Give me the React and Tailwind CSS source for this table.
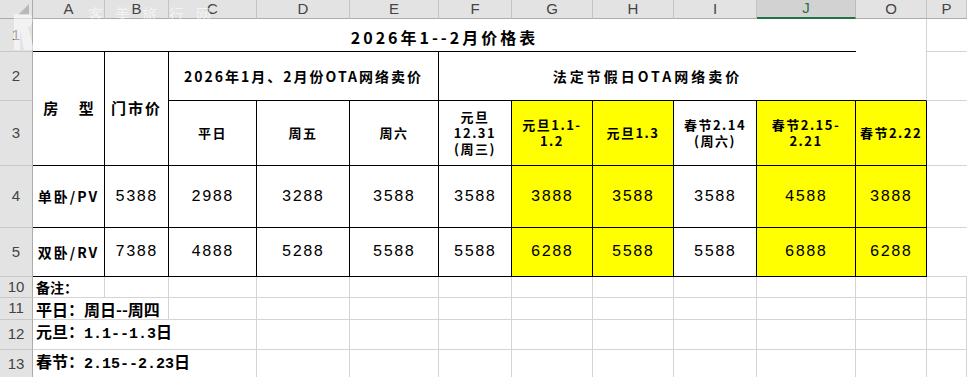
import React from 'react';

const cjk = "font-['SimSun','Noto_Sans_CJK_SC',sans-serif]";
const mono = "font-['Liberation_Mono','Noto_Sans_CJK_SC',monospace]";

const cols = ['A', 'B', 'C', 'D', 'E', 'F', 'G', 'H', 'I', 'J', 'O', 'P'];

function ColHead({ label }) {
  if (label === 'J') {
    return (
      <div className="flex items-center justify-center bg-[#d2d2d2] border-r border-r-[#bcbcbc] border-b-2 border-b-[#217346] text-[15px] text-[#217346] font-['Liberation_Sans',sans-serif]">
        {label}
      </div>
    );
  }
  return (
    <div className="flex items-center justify-center bg-[#e3e3e3] border-r border-r-[#c4c4c4] border-b border-b-[#ababab] text-[15px] text-[#444] font-['Liberation_Sans',sans-serif]">
      {label}
    </div>
  );
}

function RowHead({ n }) {
  return (
    <div className="flex items-center justify-center bg-[#e3e3e3] border-r border-r-[#ababab] border-b border-b-[#c8c8c8] text-[15px] text-[#444] font-['Liberation_Sans',sans-serif]">
      {n}
    </div>
  );
}

function Box({ className = '', children }) {
  return (
    <div className={'flex items-center justify-center text-center text-black border-r border-b ' + className}>
      {children}
    </div>
  );
}

const rows = [
  { n: 4, name: '单卧/PV', vals: ['5388', '2988', '3288', '3588', '3588', '3888', '3588', '3588', '4588', '3888'] },
  { n: 5, name: '双卧/RV', vals: ['7388', '4888', '5288', '5588', '5588', '6288', '5588', '5588', '6888', '6288'] },
];

// which of B..O are yellow
const yellow = [false, false, false, false, false, true, true, false, true, true];

const heads3 = [
  { t: ['平日'], y: false },
  { t: ['周五'], y: false },
  { t: ['周六'], y: false },
  { t: ['元旦', '12.31', '(周三)'], y: false },
  { t: ['元旦1.1-', '1.2'], y: true },
  { t: ['元旦1.3'], y: true },
  { t: ['春节2.14', '(周六)'], y: false },
  { t: ['春节2.15-', '2.21'], y: true },
  { t: ['春节2.22'], y: true },
];

export default function App() {
  return (
    <div className="relative h-[377px] w-[967px] overflow-hidden bg-white">
      <div className="grid grid-cols-[33px_72px_64px_88px_93px_89px_73px_81px_81px_83px_99px_71px_1fr] grid-rows-[19px_33px_49px_65px_62px_49px_21px_22px_30px_30px]">
        {/* header row */}
        <div className="relative bg-[#e3e3e3] border-r border-r-[#ababab] border-b border-b-[#ababab]">
          <div className="absolute right-[3px] bottom-[3px] w-0 h-0 border-l-[11px] border-l-transparent border-b-[11px] border-b-[#b8b8b8]" />
        </div>
        {cols.map((c) => (
          <ColHead key={c} label={c} />
        ))}

        {/* row 1 */}
        <RowHead n={1} />
        <div className={'col-span-10 flex items-center justify-center pt-1 border-b border-b-black font-bold text-[16px] tracking-[3px] ' + cjk}>
          2026年1--2月价格表
        </div>
        <div className="border-r border-r-[#d4d4d4]" />
        <div className="border-b border-b-[#d4d4d4]" />

        {/* row 2 */}
        <RowHead n={2} />
        <Box className={'row-span-2 border-r-black border-b-black font-bold text-[15px] ' + cjk}>
          <span>房&nbsp;&nbsp;&nbsp;&nbsp;&nbsp;&nbsp;型</span>
        </Box>
        <Box className={'row-span-2 border-r-black border-b-black font-bold text-[15px] tracking-[2px] ' + cjk}>
          门市价
        </Box>
        <Box className={'col-span-3 border-r-black border-b-black font-bold text-[14px] tracking-[2px] ' + cjk}>
          2026年1月、2月份OTA网络卖价
        </Box>
        <Box className={'col-span-5 border-r-0 border-b-black font-bold text-[14px] tracking-[3px] ' + cjk}>
          法定节假日OTA网络卖价
        </Box>
        <div className="border-r border-r-[#d4d4d4] border-b border-b-black" />
        <div className="border-b border-b-[#d4d4d4]" />

        {/* row 3 */}
        <RowHead n={3} />
        {heads3.map((h, i) => (
          <Box
            key={i}
            className={
              'flex-col border-r-black border-b-black font-bold text-[13px] leading-[16px] tracking-[1.5px] ' +
              cjk +
              (h.y ? ' bg-[#ffff00]' : '')
            }
          >
            {h.t.map((line, j) => (
              <span key={j}>{line}</span>
            ))}
          </Box>
        ))}
        <div className="border-b border-b-[#d4d4d4]" />

        {/* rows 4, 5 */}
        {rows.map((r) => (
          <React.Fragment key={r.n}>
            <RowHead n={r.n} />
            <Box className={'border-r-black border-b-black font-bold text-[14px] tracking-[2px] ' + cjk}>
              {r.name}
            </Box>
            {r.vals.map((v, i) => (
              <Box
                key={i}
                className={
                  'border-r-black border-b-black text-[16px] tracking-[1px] ' + mono + (yellow[i] ? ' bg-[#ffff00]' : '')
                }
              >
                {v}
              </Box>
            ))}
            <div className="border-b border-b-[#d4d4d4]" />
          </React.Fragment>
        ))}

        {/* row 10 */}
        <RowHead n={10} />
        <div className={'flex items-center pl-[3px] border-r border-b border-[#d4d4d4] font-bold text-[14px] ' + cjk}>
          备注：
        </div>
        {cols.slice(1).map((c) => (
          <div key={c} className="border-r border-b border-[#d4d4d4]" />
        ))}

        {/* row 11 */}
        <RowHead n={11} />
        <div className={'col-span-2 flex items-center pl-[3px] border-r border-b border-[#d4d4d4] font-bold text-[16px] ' + cjk}>
          平日：周日--周四
        </div>
        {cols.slice(2).map((c) => (
          <div key={c} className="border-r border-b border-[#d4d4d4]" />
        ))}

        {/* row 12 */}
        <RowHead n={12} />
        <div className={'col-span-3 flex items-end pb-[3px] pl-[3px] border-r border-b border-[#d4d4d4] font-bold text-[16px] ' + cjk}>
          <span>
            元旦：<span className={mono + ' text-[15px]'}>1.1--1.3</span>日
          </span>
        </div>
        {cols.slice(3).map((c) => (
          <div key={c} className="border-r border-b border-[#d4d4d4]" />
        ))}

        {/* row 13 */}
        <RowHead n={13} />
        <div className={'col-span-3 flex items-end pb-[3px] pl-[3px] border-r border-b border-[#d4d4d4] font-bold text-[16px] ' + cjk}>
          <span>
            春节：<span className={mono + ' text-[15px]'}>2.15--2.23</span>日
          </span>
        </div>
        {cols.slice(3).map((c) => (
          <div key={c} className="border-r border-b border-[#d4d4d4]" />
        ))}
      </div>

      {/* faint watermark over the top-left corner */}
      <div className="pointer-events-none absolute left-[88px] top-[3px] flex gap-[12px] text-[15px] text-white/60 font-['Noto_Sans_CJK_SC',sans-serif]">
        <span>客</span>
        <span>美</span>
        <span>旅</span>
        <span>行</span>
        <span>网</span>
      </div>
      <svg className="pointer-events-none absolute left-[12px] top-[12px]" width="24" height="40" viewBox="0 0 24 40">
        <path d="M2 2 H16 C22 2 22 14 16 15 L22 38 H12 L8 18 H8 V38 H2 Z" fill="#ffffff" fillOpacity="0.55" />
      </svg>
    </div>
  );
}
